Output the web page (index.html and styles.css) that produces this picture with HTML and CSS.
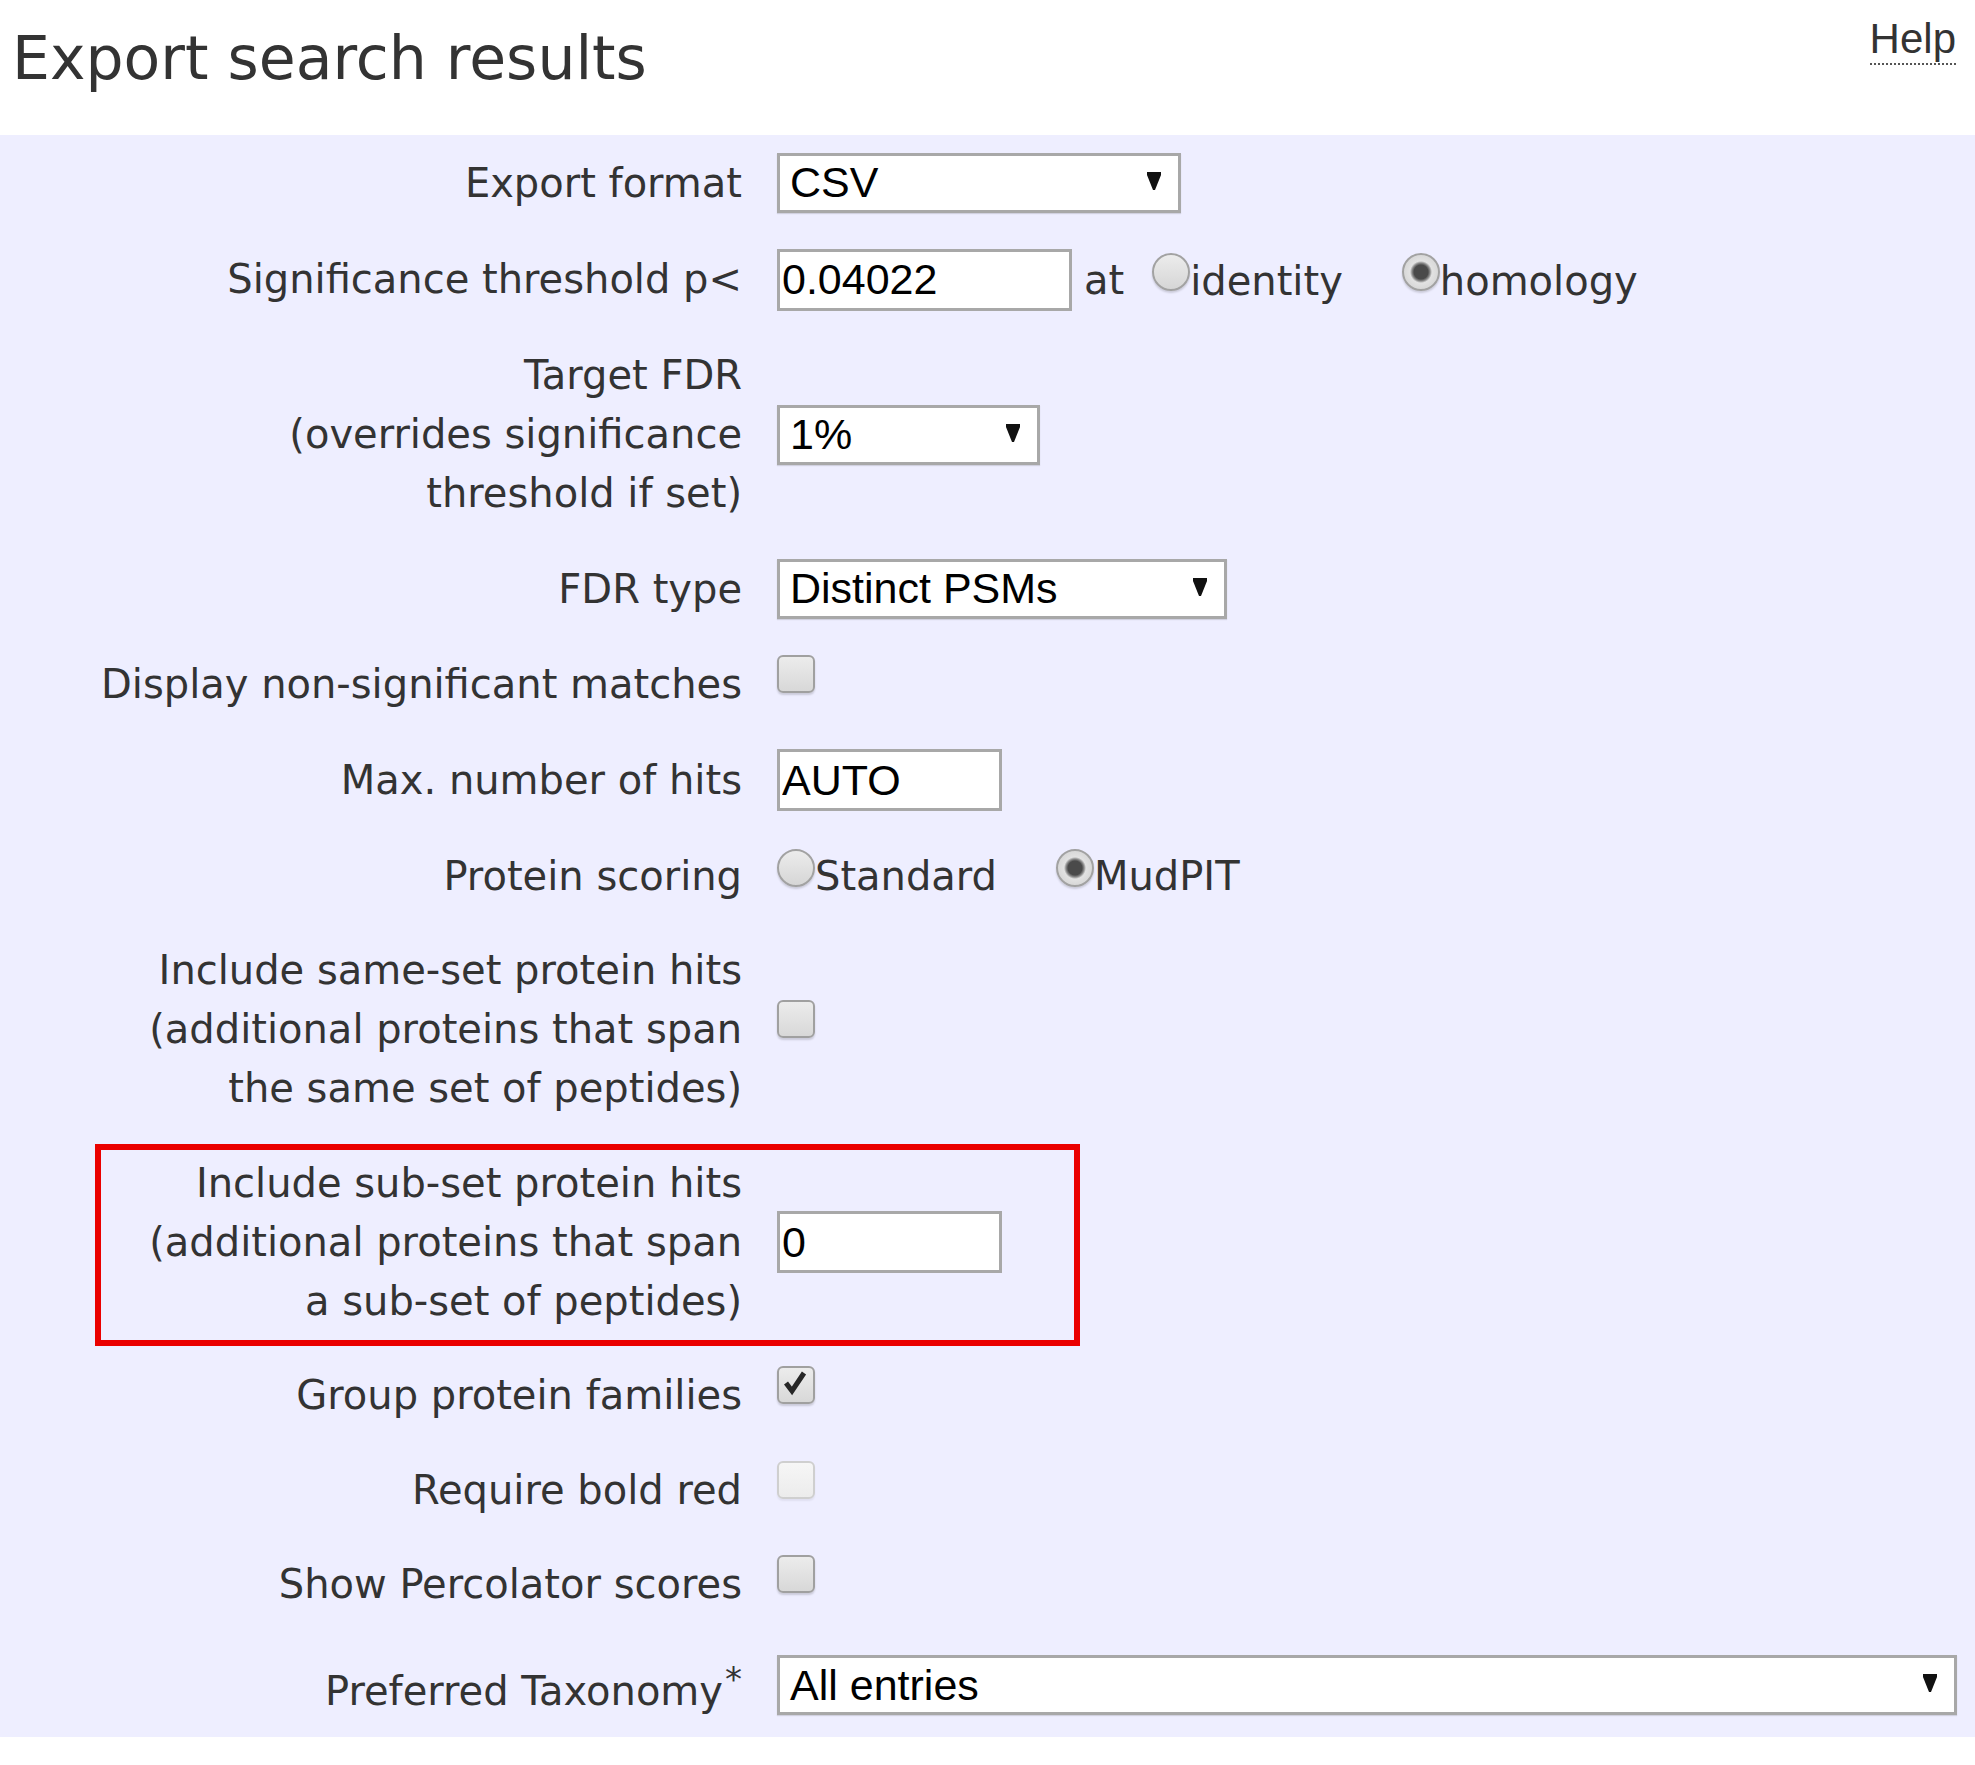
FILE: index.html
```html
<!DOCTYPE html>
<html lang="en">
<head>
<meta charset="utf-8">
<title>Export search results</title>
<link rel="stylesheet" href="styles.css">
</head>
<body>
<header class="page-head">
  <h1 class="title">Export search results</h1>
  <a class="help" href="#help">Help</a>
</header>
<form class="panel">
  <div class="row">
    <div class="label">Export format</div>
    <div class="ctl"><span class="select w-csv"><span class="val">CSV</span><svg class="arrow" viewBox="0 0 14 18" width="14" height="18"><polygon points="0,0 14,0 14,3 8,18 6,18 0,3"/></svg></span></div>
  </div>
  <div class="row">
    <div class="label">Significance threshold p&lt;</div>
    <div class="ctl"><input class="input w-sig" type="text" value="0.04022"><span class="at">at</span><span class="radio first"></span>identity<span class="radio on sep"></span>homology</div>
  </div>
  <div class="row">
    <div class="label">Target FDR<br>(overrides significance<br>threshold if set)</div>
    <div class="ctl"><span class="select w-fdr"><span class="val">1%</span><svg class="arrow" viewBox="0 0 14 18" width="14" height="18"><polygon points="0,0 14,0 14,3 8,18 6,18 0,3"/></svg></span></div>
  </div>
  <div class="row">
    <div class="label">FDR type</div>
    <div class="ctl"><span class="select w-type"><span class="val">Distinct PSMs</span><svg class="arrow" viewBox="0 0 14 18" width="14" height="18"><polygon points="0,0 14,0 14,3 8,18 6,18 0,3"/></svg></span></div>
  </div>
  <div class="row">
    <div class="label">Display non-significant matches</div>
    <div class="ctl"><span class="cb"></span></div>
  </div>
  <div class="row">
    <div class="label">Max. number of hits</div>
    <div class="ctl"><input class="input w-small" type="text" value="AUTO"></div>
  </div>
  <div class="row">
    <div class="label">Protein scoring</div>
    <div class="ctl"><span class="radio"></span>Standard<span class="radio on sep"></span>MudPIT</div>
  </div>
  <div class="row">
    <div class="label">Include same-set protein hits<br>(additional proteins that span<br>the same set of peptides)</div>
    <div class="ctl"><span class="cb"></span></div>
  </div>
  <div class="row flagged">
    <div class="label">Include sub-set protein hits<br>(additional proteins that span<br>a sub-set of peptides)</div>
    <div class="ctl"><input class="input w-small" type="text" value="0"></div>
    <span class="flag-box"></span>
  </div>
  <div class="row">
    <div class="label">Group protein families</div>
    <div class="ctl"><span class="cb"><svg class="tick" viewBox="0 0 34 34" width="34" height="34"><path d="M7 15 L13 23 L25 5"/></svg></span></div>
  </div>
  <div class="row">
    <div class="label">Require bold red</div>
    <div class="ctl"><span class="cb off"></span></div>
  </div>
  <div class="row">
    <div class="label">Show Percolator scores</div>
    <div class="ctl"><span class="cb"></span></div>
  </div>
  <div class="row last">
    <div class="label">Preferred Taxonomy<sup class="ast">*</sup></div>
    <div class="ctl"><span class="select w-tax"><span class="val">All entries</span><svg class="arrow" viewBox="0 0 14 18" width="14" height="18"><polygon points="0,0 14,0 14,3 8,18 6,18 0,3"/></svg></span></div>
  </div>
</form>
</body>
</html>
```
FILE: styles.css
```css
* { box-sizing: border-box; }

html, body {
  margin: 0;
  padding: 0;
  background: #ffffff;
}

body {
  font-family: "DejaVu Sans", Verdana, sans-serif;
  color: #333333;
}

.page-head {
  display: flex;
  justify-content: space-between;
  align-items: flex-start;
  height: 135px;
  padding: 0 19px 0 12px;
}

.title {
  margin: 22px 0 0;
  font-size: 60px;
  line-height: 72px;
  font-weight: normal;
  color: #333333;
}

.help {
  margin-top: 15px;
  font-family: "Liberation Sans", Arial, sans-serif;
  font-size: 42px;
  line-height: 48px;
  color: #333333;
  text-decoration: none;
  border-bottom: 2px dotted #555555;
}

.panel {
  margin: 0;
  background: #eeeeff;
  padding: 0;
}

.row {
  position: relative;
  display: grid;
  grid-template-columns: 742px 1fr;
  column-gap: 35px;
  align-items: center;
  padding: 17.75px 0;
}

.row.last {
  padding-bottom: 16px;
}

.label {
  text-align: right;
  font-size: 40px;
  line-height: 59px;
  white-space: nowrap;
}

.ctl {
  font-size: 40px;
  line-height: 59px;
  white-space: nowrap;
}

.ast {
  font-size: 34px;
  margin-left: 2px;
}

/* selects */
.select {
  display: inline-flex;
  align-items: center;
  justify-content: space-between;
  height: 60px;
  padding: 0 17px 0 10px;
  background: #ffffff;
  border: 3px solid #a8a8a8;
  box-shadow: 0 1px 1px rgba(0, 0, 0, 0.12);
  font-family: "Liberation Sans", Arial, sans-serif;
  font-size: 43px;
  line-height: normal;
  color: #000000;
  vertical-align: baseline;
}

.arrow {
  display: block;
  fill: #111111;
  margin-top: -4px;
}

.w-csv { width: 404px; }
.w-fdr { width: 263px; }
.w-type { width: 450px; }
.w-tax { width: 1180px; }

/* text inputs */
.input {
  height: 62px;
  margin: 0;
  padding: 0 2px;
  border: 3px solid #a8a8a8;
  background: #ffffff;
  font-family: "Liberation Sans", Arial, sans-serif;
  font-size: 43px;
  color: #000000;
  vertical-align: baseline;
  outline: none;
}

.w-sig { width: 295px; }
.w-small { width: 225px; }

.at {
  margin-left: 12px;
}

/* radios */
.radio {
  display: inline-block;
  width: 38px;
  height: 38px;
  margin-bottom: 3px;
  border: 2px solid #a2a2a2;
  border-radius: 50%;
  background: linear-gradient(#ececec, #d6d6d6);
  box-shadow: 0 2px 2px rgba(0, 0, 0, 0.15);
  vertical-align: baseline;
}

.radio.first { margin-left: 28px; }
.radio.sep { margin-left: 59px; }

.radio.on {
  background: radial-gradient(circle, #4a4a4a 0, #4a4a4a 7px, #8a8a8a 9px, #e2e2e2 11px, #d8d8d8 17px);
}

/* checkboxes */
.cb {
  display: inline-block;
  position: relative;
  width: 38px;
  height: 38px;
  margin-bottom: 5px;
  border: 2px solid #a0a0a0;
  border-radius: 6px;
  background: linear-gradient(#ececec, #d8d8d8);
  box-shadow: 0 2px 2px rgba(0, 0, 0, 0.15);
  vertical-align: baseline;
}

.cb.off {
  border-color: #cfcfcf;
  background: linear-gradient(#f6f6f6, #ececec);
  box-shadow: 0 2px 2px rgba(0, 0, 0, 0.06);
}

.tick {
  display: block;
  fill: none;
  stroke: #262626;
  stroke-width: 5;
  stroke-linejoin: miter;
}

/* annotation frame */
.flag-box {
  position: absolute;
  left: 95px;
  top: 8px;
  width: 985px;
  height: 202px;
  border: 6px solid #ea0000;
  pointer-events: none;
}
```
